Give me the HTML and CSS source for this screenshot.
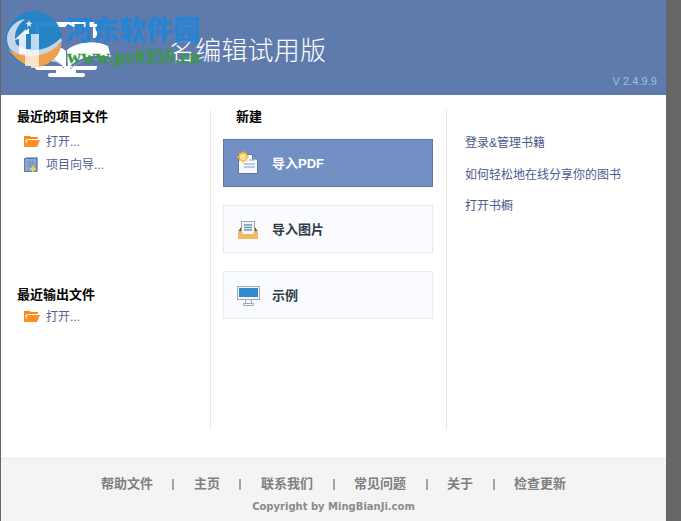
FILE: index.html
```html
<!DOCTYPE html>
<html lang="zh">
<head>
<meta charset="utf-8">
<title>名编辑</title>
<link rel="stylesheet" href="styles.css">
</head>
<body>
<div class="window">
  <header class="header">
    <svg class="logo" width="80" height="60" viewBox="0 0 80 60">
      <path fill="#fff" fill-rule="evenodd" d="M4 2H60a3 3 0 0 1 3 3V47a3 3 0 0 1-3 3H42V53H49a2 2 0 0 1 0 4H16a2 2 0 0 1 0-4H22V50H4a3 3 0 0 1-3-3V5a3 3 0 0 1 3-3ZM5 7V46H59V7Z"/>
      <path fill="#5f7bad" d="M28 18H66V46H28Z"/>
      <path fill="#fff" d="M33 30C42 23 58 19 74 26L77 37C62 33 44 37 34 48Z"/>
      <path fill="#fff" d="M32 31C28 27 22 26 16 26V41C22 41 28 44 32 49Z"/>
      <path fill="none" stroke="#7f9ac6" d="M30 48C26 44 22 41 17 38M36 49C46 39 62 37 76 41"/>
    </svg>
    <h1 class="title">名编辑试用版</h1>
    <span class="version">V 2.4.9.9</span>
  </header>

  <main class="content">
    <section class="col col-recent">
      <div class="group group-project">
        <h2 class="heading">最近的项目文件</h2>
        <a class="file-link">
          <svg class="file-icon" width="18" height="18" viewBox="0 0 18 18"><use href="#folder"/></svg>打开...
        </a>
        <a class="file-link">
          <svg class="file-icon" width="18" height="18" viewBox="0 0 18 18">
            <path d="M3 2.500H14.500V16" fill="none" stroke="#8fa9cb"/>
            <rect x="1.500" y="3.500" width="12" height="13" fill="#8aa7cc" stroke="#5f7fa8"/>
            <path d="M5 7h6M5 9h6M5 11h3" stroke="#6d8bb2"/>
            <path d="M10 11v6M7 14h6" stroke="#ffd24d" stroke-width="1.500"/>
          </svg>项目向导...
        </a>
      </div>
      <div class="group group-output">
        <h2 class="heading">最近输出文件</h2>
        <a class="file-link">
          <svg class="file-icon" width="18" height="18" viewBox="0 0 18 18"><use href="#folder"/></svg>打开...
        </a>
      </div>
    </section>

    <section class="col col-new">
      <h2 class="heading heading-new">新建</h2>
      <a class="action action-active">
        <svg class="action-icon" width="26" height="26" viewBox="0 0 26 26">
          <path d="M1.500 4.500H15.500L20.500 9V23.500H1.500Z" fill="#f6f9fd" stroke="#5f77a0"/>
          <path d="M15.500 4.500V9H20.500Z" fill="#8fa6cc" stroke="#5f77a0"/>
          <path d="M12 10H18M7 14H18M7 17H18" stroke="#7d9bc6"/>
          <circle cx="6" cy="7" r="4" fill="#ffe49a" stroke="#fdb92f" stroke-width="1.500"/>
          <path d="M6 1v3M6 10v3M0 7h3M9 7h3M2 3l2 2M8 9l2 2M10 3l-2 2M4 9l-2 2" stroke="#fdb92f"/>
        </svg>
        <span>导入PDF</span>
      </a>
      <a class="action">
        <svg class="action-icon" width="26" height="26" viewBox="0 0 26 26">
          <path d="M4 11 1 16H21L18 11Z" fill="#6b4a34"/>
          <rect x="4.500" y="5.500" width="13" height="13" fill="#f4f6f9" stroke="#9aa5b4"/>
          <path d="M7 9H15M7 11.500H15M7 14H15" stroke="#6d94bd" stroke-width="1.500"/>
          <path d="M1 15H4.500L6 18H16L17.500 15H21V23H1Z" fill="#efbb62"/>
        </svg>
        <span>导入图片</span>
      </a>
      <a class="action">
        <svg class="action-icon" width="26" height="26" viewBox="0 0 26 26">
          <rect x=".5" y="4.500" width="22" height="13" fill="#f4f7fb" stroke="#9dabb9"/>
          <rect x="2" y="6" width="19" height="9" fill="#2f8ad0"/>
          <path d="M8.500 18v3M14.500 18v3M6.500 21.500H16.500V23.500H6.500Z" stroke="#9dabb9" fill="none"/>
        </svg>
        <span>示例</span>
      </a>
    </section>

    <section class="col col-links">
      <a class="side-link">登录&amp;管理书籍</a>
      <a class="side-link">如何轻松地在线分享你的图书</a>
      <a class="side-link">打开书橱</a>
    </section>
  </main>

  <footer class="footer">
    <nav class="footer-nav">
      <a>帮助文件</a><i></i><a>主页</a><i></i><a>联系我们</a><i></i><a>常见问题</a><i></i><a>关于</a><i></i><a>检查更新</a>
    </nav>
    <p class="copyright">Copyright by MingBianJi.com</p>
  </footer>
</div>

<div class="badge">
  <svg class="badge-logo" width="58" height="58" viewBox="0 0 58 58">
    <circle cx="29" cy="29" r="28" fill="#2484c6" opacity=".95"/>
    <path d="M3 39C12 52 24 57 30 57C44 57 55 46 57 32C44 46 18 49 3 39Z" fill="#f0a04b"/>
    <path d="M2 29C2 18 12 10 20 9C12 15 8 24 11 34C22 44 42 42 56 28L57 31C46 46 20 52 5 39C3 36 2 32 2 29Z" fill="#d8dfea" opacity=".9"/>
    <path d="M9 30 21 19V44H14V29Z" fill="#fff" opacity=".85"/>
    <path d="M26 24h8V58h-8ZM20 39h6v17h-6Z" fill="#fff" opacity=".7"/>
    <path d="M18 24h6v-6z" fill="#fff"/>
    <path d="M24 10l1 2.500 2.500.5-2 1.500.5 2.500-2-1.500-2 1.500.5-2.500-2-1.500 2.500-.5Z" fill="#dfe9f5"/>
  </svg>
  <span class="wm-cn">河东软件园</span>
  <span class="wm-en">www.pc0359.cn</span>
</div>

<svg class="defs" width="0" height="0">
  <defs>
    <g id="folder">
      <path d="M1 4H7L8 5H15V7H5L2 15H1Z" fill="#f68a1e"/>
      <path d="M2.500 7.500H5L3 13Z" fill="#fff"/>
      <path d="M4.500 8H17L14 15H2Z" fill="#fb8f24"/>
    </g>
  </defs>
</svg>
</body>
</html>
```
FILE: styles.css
```css
html, body {
  margin: 0;
  padding: 0;
  height: 100%;
  overflow: hidden;
  background: #666;
}
body {
  font-family: "Liberation Sans", "Noto Sans CJK SC", sans-serif;
}
.window {
  width: 665px;
  height: 521px;
  margin-left: 1px;
  background: #fff;
  display: flex;
  flex-direction: column;
}
.header {
  height: 95px;
  flex: none;
  background: #5f7bad;
  position: relative;
  display: flex;
}
.logo {
  margin: 20px 0 0 33px;
  flex: none;
}
.title {
  margin: 33px 0 0 55px;
  font-size: 26px;
  line-height: 36px;
  font-weight: 300;
  color: #fff;
  letter-spacing: .2px;
}
.version {
  position: absolute;
  right: 9px;
  top: 74px;
  font-size: 11px;
  line-height: 14px;
  letter-spacing: .05px;
  color: #a3bde6;
}
.content {
  flex: none;
  height: 348px;
  display: flex;
  padding-top: 15px;
}
.col {
  height: 320px;
  box-sizing: border-box;
}
.col-recent {
  width: 210px;
  border-right: 1px solid #ebe7e1;
  padding: 0 0 0 16px;
}
.col-new {
  width: 236px;
  border-right: 1px solid #ebe7e1;
  padding: 0 0 0 12px;
}
.col-links {
  flex: 1;
  padding: 25px 0 0 18px;
}
.heading {
  margin: 0;
  font-size: 13px;
  line-height: 14px;
  font-weight: bold;
  color: #000;
}
.group-project {
  height: 178px;
}
.file-link {
  display: flex;
  align-items: center;
  height: 23px;
  font-size: 12px;
  color: #535d91;
  padding-left: 6px;
}
.group-project .heading + .file-link {
  margin-top: 5px;
}
.group-output .heading + .file-link {
  margin-top: 2px;
}
.file-icon {
  width: 18px;
  height: 18px;
  margin-right: 5px;
  flex: none;
}
.heading-new {
  margin-left: 13px;
  margin-bottom: 15px;
}
.action {
  box-sizing: border-box;
  width: 210px;
  height: 48px;
  margin-bottom: 18px;
  background: #f9fbfe;
  border: 1px solid #e6eaf1;
  display: flex;
  align-items: center;
  padding-left: 13px;
  font-size: 13px;
  font-weight: bold;
  color: #333b48;
}
.action span {
  margin-bottom: 2px;
}
.action-active {
  background: #7290c3;
  border-color: #5f779f;
  color: #fff;
}
.action-icon {
  width: 26px;
  height: 26px;
  margin-right: 9px;
  flex: none;
}
.side-link {
  display: block;
  height: 31.500px;
  line-height: 16px;
  font-size: 12px;
  color: #4d5a8c;
}
.footer {
  flex: 1;
  background: #f4f4f4;
  border-top: 1px solid #ece9e3;
  text-align: center;
  color: #7f7f7f;
  font-weight: bold;
}
.footer-nav {
  display: flex;
  justify-content: center;
  align-items: center;
  gap: 19.500px;
  margin-top: 17px;
  font-size: 13px;
  line-height: 16px;
}
.footer-nav i {
  width: 2px;
  height: 11px;
  background: #98a4b2;
}
.copyright {
  margin: 8px 0 0;
  font-family: "DejaVu Sans", "Liberation Sans", sans-serif;
  font-size: 10px;
  line-height: 14px;
  color: #8a8a8a;
}
.badge {
  position: absolute;
  left: 0;
  top: 0;
}
.badge-logo {
  position: absolute;
  left: 5px;
  top: 10px;
}
.wm-cn {
  position: absolute;
  left: 65px;
  top: 13px;
  white-space: nowrap;
  font-family: "Noto Sans CJK SC", sans-serif;
  font-size: 27px;
  line-height: 32px;
  font-weight: 900;
  color: #2484d6;
}
.wm-en {
  position: absolute;
  left: 67px;
  top: 46px;
  white-space: nowrap;
  font-family: "Liberation Serif", serif;
  font-size: 19.500px;
  line-height: 22px;
  font-weight: bold;
  letter-spacing: .35px;
  color: #3a9a40;
  -webkit-text-stroke: .3px #3a9a40;
}
.defs {
  position: absolute;
}
```
